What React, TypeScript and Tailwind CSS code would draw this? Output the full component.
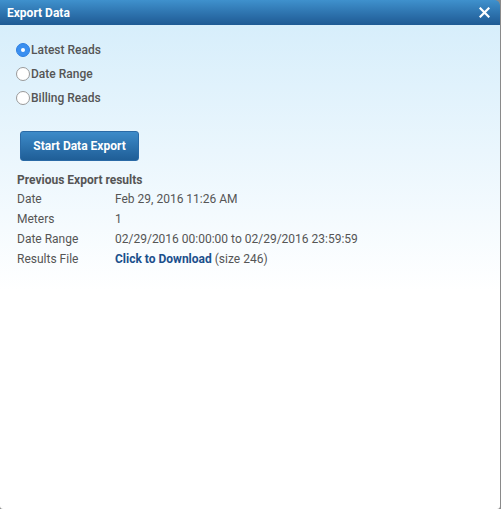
import React from "react";

function Radio({ checked, label }: { checked?: boolean; label: string }) {
  return (
    <label className="flex items-center h-[24px]">
      {checked ? (
        <span className="w-[14px] h-[14px] rounded-full bg-[#3a8ff0] border border-[#2f7fe0] flex items-center justify-center">
          <span className="w-[4px] h-[4px] rounded-full bg-white" />
        </span>
      ) : (
        <span className="w-[14px] h-[14px] rounded-full bg-white border border-[#9a9a9a]" />
      )}
      <span className="ml-[1px] text-[12px] font-medium text-[#555]">{label}</span>
    </label>
  );
}

export default function App() {
  const rows: [string, React.ReactNode][] = [
    ["Date", "Feb 29, 2016 11:26 AM"],
    ["Meters", "1"],
    ["Date Range", "02/29/2016 00:00:00 to 02/29/2016 23:59:59"],
    [
      "Results File",
      <>
        <span className="font-bold text-[#1a4f8c]">Click to Download</span> (size 246)
      </>,
    ],
  ];
  return (
    <div
      className="w-[501px] h-[509px] bg-[#8a8a8a] overflow-hidden"
      style={{ fontFamily: "Roboto, 'Liberation Sans', sans-serif" }}
    >
      <div className="w-[500px] h-[509px] flex flex-col rounded-tr-[5px] rounded-br-[3px] rounded-bl-[3px] overflow-hidden">
        <div className="h-[25px] shrink-0 flex items-center justify-between pl-[7px] pr-[10px] bg-gradient-to-b from-[#3f91cd] to-[#1f5a94] rounded-tr-[5px]">
          <span className="text-white font-bold text-[12px]">Export Data</span>
          <svg width="11" height="11" viewBox="0 0 11 11">
            <path d="M1.5 1.5 L9.5 9.5 M9.5 1.5 L1.5 9.5" stroke="white" strokeWidth="2.2" strokeLinecap="square" />
          </svg>
        </div>
        <div className="flex-1 bg-gradient-to-b from-[#d7eefb] via-[#ffffff] via-[55%] to-white pl-[16px] pt-[13px]">
          <Radio checked label="Latest Reads" />
          <Radio label="Date Range" />
          <Radio label="Billing Reads" />
          <button className="mt-[21px] ml-[4px] w-[119px] h-[30px] rounded-[3px] border border-[#2a6aa6] bg-gradient-to-b from-[#3d8bc9] to-[#1f5e97] text-white text-[12px] font-bold">
            Start Data Export
          </button>
          <div className="mt-[10px] ml-[1px] text-[12px] text-[#555]">
            <div className="font-bold h-[18px] leading-[18px]">Previous Export results</div>
            {rows.map(([k, v]) => (
              <div key={k} className="flex h-[20px] items-center">
                <span className="w-[98px]">{k}</span>
                <span>{v}</span>
              </div>
            ))}
          </div>
        </div>
      </div>
    </div>
  );
}
